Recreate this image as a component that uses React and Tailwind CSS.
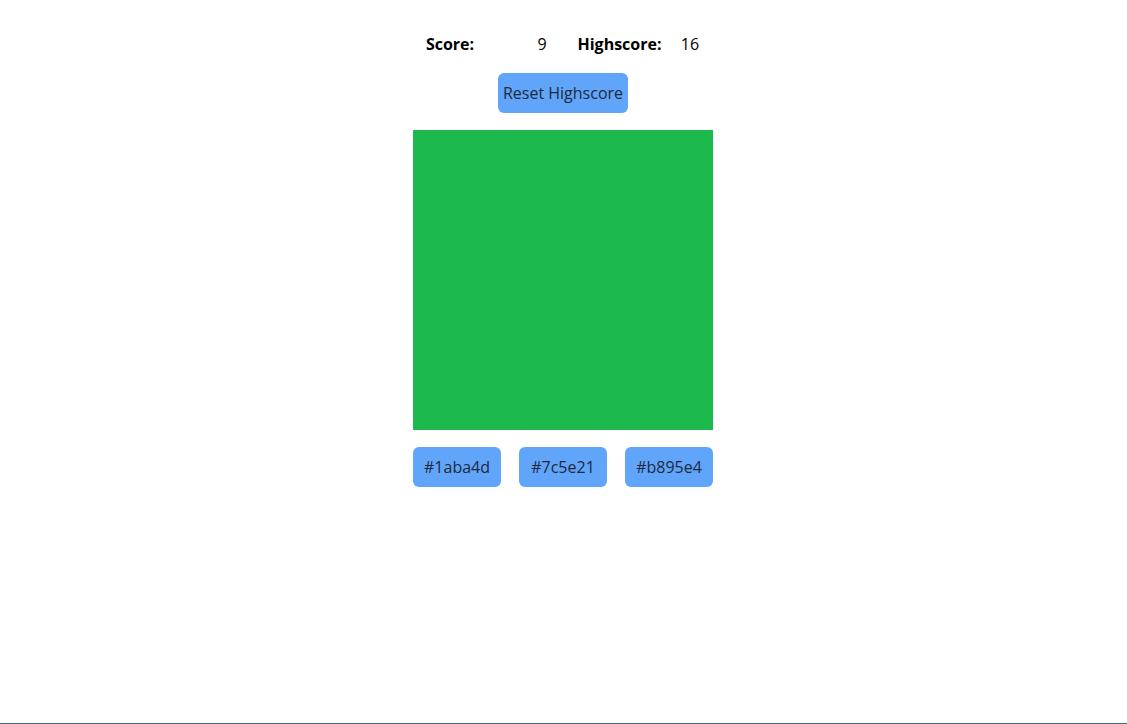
export default function App() {
  const options = ["#1aba4d", "#7c5e21", "#b895e4"];

  return (
    <div
      className="h-screen w-full bg-white border-b border-[#3f6b7c] text-[16px] text-[#1f2937]"
      style={{ fontFamily: '"Open Sans", "Noto Sans", sans-serif' }}
    >
      <div className="flex flex-col items-center pt-[32px] pr-[1px] gap-[17px]">
        {/* Score row */}
        <div className="w-[300px] flex items-center leading-6 text-black">
          <span className="ml-[7px] w-[60px] text-center font-bold">Score:</span>
          <span className="ml-[32px] w-[60px] text-center">9</span>
          <span className="ml-[2px] w-[91px] text-center font-bold">Highscore:</span>
          <span className="ml-[5px] w-[40px] text-center">16</span>
        </div>

        <button className="h-[40px] w-[130px] rounded-md bg-[#60a5fa] text-[#1e293b]">
          Reset Highscore
        </button>

        {/* Color square */}
        <div className="w-[300px] h-[300px] bg-[#1cba4d]" />

        {/* Guess buttons */}
        <div className="w-[300px] flex justify-between">
          {options.map((c) => (
            <button
              key={c}
              className="h-[40px] w-[88px] rounded-md bg-[#60a5fa] text-[#1e293b]"
            >
              {c}
            </button>
          ))}
        </div>
      </div>
    </div>
  );
}
